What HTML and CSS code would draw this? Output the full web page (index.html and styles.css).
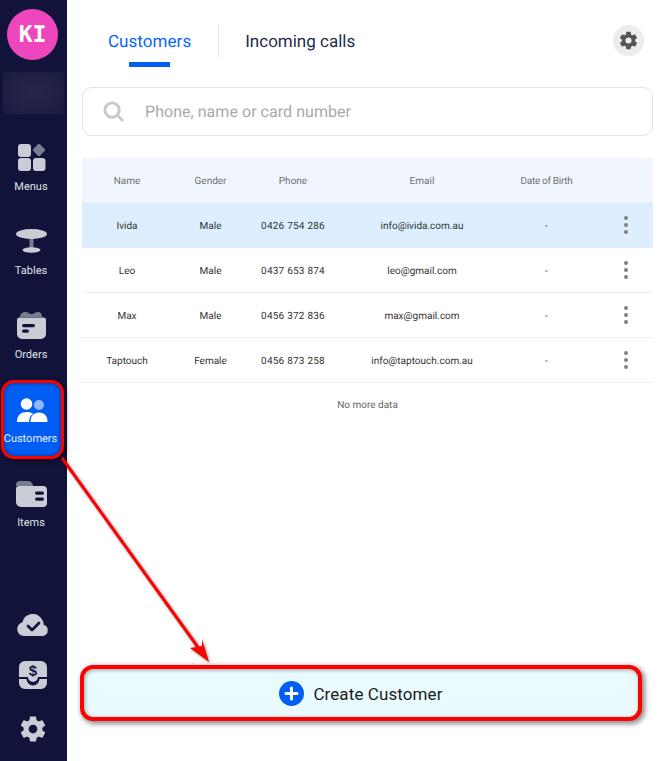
FILE: index.html
```html
<!DOCTYPE html>
<html lang="en">
<head>
<meta charset="utf-8">
<title>Customers</title>
<link rel="stylesheet" href="styles.css">
</head>
<body>
<div class="app">
  <aside class="sidebar">
    <div class="avatar">KI</div>
    <div class="blurred"></div>
    <nav class="nav">
      <a class="nav-item">
        <svg class="nav-icon" viewBox="0 0 32 32" width="32" height="32"><rect x="3" y="3" width="13" height="13" rx="3" fill="#c9ced6"/><rect x="3" y="17" width="13" height="13" rx="3" fill="#c9ced6"/><rect x="18" y="17" width="12.500" height="13" rx="3" fill="#c9ced6"/><rect x="19.250" y="4.250" width="9.500" height="9.500" rx="1.500" transform="rotate(45 24 9)" fill="#767e90"/></svg>
        <span>Menus</span>
      </a>
      <a class="nav-item">
        <svg class="nav-icon" viewBox="0 0 32 32" width="32" height="32"><rect x="14.500" y="12" width="4" height="13" fill="#767e90"/><ellipse cx="16.500" cy="25" rx="9" ry="2.800" fill="#c9ced6"/><ellipse cx="16.500" cy="9" rx="15.500" ry="5" fill="#c9ced6"/></svg>
        <span>Tables</span>
      </a>
      <a class="nav-item">
        <svg class="nav-icon" viewBox="0 0 32 32" width="32" height="32"><path d="M5 8C5 4.500 8 3 10.500 3S14 4 15 5H18C19 4 20.500 3 23 3S27 4.500 27 8z" fill="#767e90"/><path d="M2 11a2.500 2.500 0 0 1 2.500-2.500h24A2.500 2.500 0 0 1 31 11v14a5 5 0 0 1-5 5H7a5 5 0 0 1-5-5z" fill="#c9ced6"/><rect x="7" y="15" width="13" height="3.200" rx="1.600" fill="#12133a"/><rect x="7" y="20.500" width="7" height="3.200" rx="1.600" fill="#12133a"/></svg>
        <span>Orders</span>
      </a>
      <a class="nav-item nav-item-active">
        <svg class="nav-icon" viewBox="0 0 32 32" width="32" height="32"><circle cx="23" cy="12" r="5" fill="#8fb8ff"/><path d="M14.500 29c0-6 3-9.500 8.500-9.500s8.500 3.500 8.500 9.500z" fill="#fff"/><path d="M1 29c0-7 4-10 10-10 2.500 0 4.500.6 6 1.600-2.500 2-4 5-4 8.400z" fill="#fff"/><circle cx="10.500" cy="11" r="5.800" fill="#fff"/></svg>
        <span>Customers</span>
      </a>
      <a class="nav-item">
        <svg class="nav-icon" viewBox="0 0 32 32" width="32" height="32"><path d="M1 8a4 4 0 0 1 4-4h8a5 5 0 0 1 5 5H1z" fill="#767e90"/><path d="M1 11a3 3 0 0 1 3-2h24a4 4 0 0 1 4 4v13a4 4 0 0 1-4 4H6a5 5 0 0 1-5-5z" fill="#c9ced6"/><rect x="20" y="14.500" width="9" height="3.200" rx="1.600" fill="#12133a"/><rect x="20" y="20.500" width="9" height="3.200" rx="1.600" fill="#12133a"/></svg>
        <span>Items</span>
      </a>
    </nav>
    <div class="sidebar-bottom">
      <svg class="side-cloud" viewBox="0 0 34 26" width="34" height="26"><path d="M8 25a7 7 0 0 1-1.500-13.800A10.500 10.500 0 0 1 26 8.500a6 6 0 0 1 1.500 5.200 5.800 5.800 0 0 1-.5 11.300z" fill="#c9ced6"/><path d="M12 15l4 4 7-7" fill="none" stroke="#12133a" stroke-width="2.800" stroke-linecap="round" stroke-linejoin="round"/></svg>
      <svg class="side-till" viewBox="0 0 28 28" width="28" height="28"><path d="M0 6a6 6 0 0 1 6-6h16a6 6 0 0 1 6 6v10H19a5 5 0 0 1-10 0H0z" fill="#c9ced6"/><path d="M0 18h7.500a6.500 6.500 0 0 0 13 0H28v4a6 6 0 0 1-6 6H6a6 6 0 0 1-6-6z" fill="#c9ced6"/><text class="dollar" x="14" y="15" text-anchor="middle">$</text></svg>
      <svg viewBox="0 0 24 24" width="30" height="30"><path fill="#c9ced6" d="M19.430 12.980c.04-.32.07-.64.07-.98s-.03-.66-.07-.98l2.110-1.650c.19-.15.240-.42.120-.64l-2-3.460c-.12-.22-.39-.3-.61-.22l-2.490 1c-.52-.4-1.080-.73-1.690-.98l-.38-2.650A.49.490 0 0 0 14 2h-4c-.25 0-.46.18-.49.420l-.38 2.650c-.61.25-1.170.59-1.690.98l-2.490-1c-.23-.09-.49 0-.61.22l-2 3.460c-.13.220-.07.490.12.640l2.110 1.650c-.04.32-.07.65-.07.980s.03.660.07.980l-2.110 1.650c-.19.150-.24.420-.12.640l2 3.460c.12.220.39.300.61.220l2.490-1c.52.400 1.080.730 1.690.980l.38 2.650c.03.240.24.420.49.420h4c.25 0 .46-.18.49-.42l.38-2.650c.61-.25 1.170-.59 1.690-.98l2.490 1c.23.090.49 0 .61-.22l2-3.460c.12-.22.07-.49-.12-.64zM12 15.500a3.500 3.500 0 1 1 0-7 3.500 3.500 0 0 1 0 7z"/></svg>
    </div>
  </aside>

  <main class="main">
    <header class="topbar">
      <div class="tabs">
        <div class="tab tab-active">Customers</div>
        <div class="tab-sep"></div>
        <div class="tab">Incoming calls</div>
      </div>
      <button class="settings">
        <svg viewBox="0 0 24 24" width="21" height="21"><path fill="#555" d="M19.430 12.980c.04-.32.07-.64.07-.98s-.03-.66-.07-.98l2.110-1.650c.19-.15.240-.42.120-.64l-2-3.460c-.12-.22-.39-.3-.61-.22l-2.490 1c-.52-.4-1.080-.73-1.690-.98l-.38-2.650A.49.490 0 0 0 14 2h-4c-.25 0-.46.18-.49.420l-.38 2.650c-.61.25-1.170.59-1.690.98l-2.490-1c-.23-.09-.49 0-.61.22l-2 3.460c-.13.220-.07.490.12.640l2.110 1.650c-.04.32-.07.65-.07.980s.03.660.07.980l-2.110 1.650c-.19.150-.24.420-.12.640l2 3.460c.12.220.39.300.61.220l2.490-1c.52.400 1.080.730 1.690.980l.38 2.650c.03.240.24.420.49.420h4c.25 0 .46-.18.49-.42l.38-2.650c.61-.25 1.170-.59 1.690-.98l2.490 1c.23.090.49 0 .61-.22l2-3.460c.12-.22.07-.49-.12-.64zM12 15.500a3.500 3.500 0 1 1 0-7 3.500 3.500 0 0 1 0 7z"/></svg>
      </button>
    </header>

    <div class="search">
      <svg viewBox="0 0 22 22" width="21" height="21"><circle cx="9.500" cy="9.500" r="7.500" fill="none" stroke="#c8c8c8" stroke-width="3"/><path d="M15 15l5 5" stroke="#c8c8c8" stroke-width="3" stroke-linecap="round"/></svg>
      <span>Phone, name or card number</span>
    </div>

    <div class="table">
      <div class="row row-head">
        <div>Name</div><div>Gender</div><div>Phone</div><div>Email</div><div class="cell-dob">Date of Birth</div><div></div>
      </div>
      <div class="row row-selected">
        <div>Ivida</div><div>Male</div><div class="cell-phone">0426 754 286</div><div>info@ivida.com.au</div><div>-</div><div class="more"><i></i><i></i><i></i></div>
      </div>
      <div class="row">
        <div>Leo</div><div>Male</div><div class="cell-phone">0437 653 874</div><div>leo@gmail.com</div><div>-</div><div class="more"><i></i><i></i><i></i></div>
      </div>
      <div class="row">
        <div>Max</div><div>Male</div><div class="cell-phone">0456 372 836</div><div>max@gmail.com</div><div>-</div><div class="more"><i></i><i></i><i></i></div>
      </div>
      <div class="row">
        <div>Taptouch</div><div>Female</div><div class="cell-phone">0456 873 258</div><div>info@taptouch.com.au</div><div>-</div><div class="more"><i></i><i></i><i></i></div>
      </div>
      <div class="no-more">No more data</div>
    </div>

    <button class="create">
      <svg viewBox="0 0 25 25" width="25" height="25"><circle cx="12.500" cy="12.500" r="12.500" fill="#005ef5"/><path d="M12.500 7v11M7 12.500h11" stroke="#fff" stroke-width="3" stroke-linecap="round"/></svg>
      <span class="create-label">Create Customer</span>
    </button>
  </main>
</div>

<svg class="annotation-arrow" viewBox="0 0 666 761" width="666" height="761">
  <path d="M62 458L205 657" stroke="#ff0000" stroke-width="3" fill="none"/>
  <path d="M209 662L190 648L202 646L202 639z" fill="#ff0000"/>
</svg>
</body>
</html>
```
FILE: styles.css
```css
* { box-sizing: border-box; }
html, body { margin: 0; padding: 0; }
body {
  width: 666px;
  height: 761px;
  overflow: hidden;
  background: #fff;
  font-family: Roboto, "Liberation Sans", sans-serif;
  text-rendering: geometricPrecision;
  position: relative;
}
.app { display: flex; height: 761px; }

.sidebar {
  width: 67px;
  flex: none;
  background: #12133a;
  display: flex;
  flex-direction: column;
  align-items: center;
  padding-top: 9px;
}
.avatar {
  width: 51px;
  height: 51px;
  margin-left: -2px;
  border-radius: 50%;
  background: #ee46bc;
  color: #fff;
  display: flex;
  align-items: center;
  justify-content: center;
  font-family: "DejaVu Sans Mono", "Liberation Mono", monospace;
  font-weight: 700;
  font-size: 23px;
}
.blurred {
  width: 61px;
  height: 42px;
  margin-top: 12px;
  background: radial-gradient(ellipse at center, #25274a 0%, #1a1b40 100%);
}
.nav {
  display: flex;
  flex-direction: column;
  align-items: center;
  margin-top: 27px;
  margin-left: -5px;
}
.nav-item {
  width: 58px;
  height: 84px;
  display: flex;
  flex-direction: column;
  align-items: center;
  color: #dfe2e8;
  font-size: 11px;
  line-height: 13px;
}
.nav-icon { height: 32px; margin-bottom: 7px; flex: none; }
.nav-item span { display: block; }
.nav-item-active {
  align-self: flex-start;
  width: 57px;
  height: 73px;
  margin: -10px 0 21px 2px;
  padding: 10px 3px 0 0;
  background: #005ef5;
  border-radius: 10px;
  color: #e8f0ff;
  box-shadow: inset 0 0 4px rgba(0, 0, 60, .5), 0 0 0 3px #ff0000, 2px 2px 5px 3px rgba(0, 0, 0, .4);
}
.nav-item-active .nav-icon { margin-left: 2px; }
.sidebar-bottom {
  margin-top: auto;
  margin-left: -1px;
  padding-bottom: 17px;
  display: flex;
  flex-direction: column;
  align-items: center;
  gap: 25px;
}
.side-till { margin-top: -1px; }
.dollar { font: 700 15px "Liberation Sans", sans-serif; fill: #12133a; }

.main {
  flex: 1;
  min-width: 0;
  display: flex;
  flex-direction: column;
  padding: 0 13px 0 15px;
}
.topbar {
  height: 87px;
  display: flex;
  justify-content: space-between;
  align-items: flex-start;
}
.tabs { display: flex; align-items: flex-start; padding-top: 24px; }
.tab {
  position: relative;
  font-size: 17px;
  line-height: 37px;
  color: #232c4b;
  padding: 0 26px;
  white-space: nowrap;
}
.tab-active { color: #0a66f5; padding-right: 27px; letter-spacing: .05px; }
.tab-active::after {
  content: "";
  position: absolute;
  left: 47px;
  bottom: -6px;
  width: 41px;
  height: 5px;
  background: #005ef5;
}
.tab-sep { width: 1px; height: 33px; background: #e3e3e3; }
.settings {
  width: 31px;
  height: 31px;
  margin-top: 25px;
  margin-right: 9px;
  border: 0;
  padding: 0;
  border-radius: 50%;
  background: #ececec;
  display: flex;
  align-items: center;
  justify-content: center;
}
.search {
  height: 49px;
  border: 1px solid #e2e2e2;
  border-radius: 10px;
  display: flex;
  align-items: center;
  padding-left: 20px;
  gap: 21px;
  color: #a9a9a9;
  font-size: 16px;
  letter-spacing: .04px;
  flex: none;
}
.table { margin-top: 22px; }
.row {
  display: grid;
  grid-template-columns: 90px 77px 88px 170px 79px 67px;
  height: 45px;
  padding-top: 2px;
  align-items: center;
  text-align: center;
  font-size: 10px;
  color: #333;
  border-bottom: 1px solid #eeeeee;
}
.row-head { background: #f1f6fe; color: #707070; }
.row-selected { background: #ddeffe; border-bottom-color: #ddeffe; }
.cell-phone { letter-spacing: .22px; }
.cell-dob { letter-spacing: -.3px; }
.more {
  display: flex;
  flex-direction: column;
  align-items: flex-end;
  margin-top: -2px;
  padding-right: 25px;
  gap: 3px;
}
.more i { width: 4px; height: 4px; border-radius: 50%; background: #808080; display: block; }
.no-more {
  text-align: center;
  font-size: 10px;
  color: #666;
  padding-top: 17px;
}
.create {
  position: absolute;
  left: 80px;
  top: 665px;
  width: 562px;
  height: 56px;
  border: 4px solid #ff0000;
  border-radius: 13px;
  background: #e9fbfe;
  box-shadow: 2px 2px 5px 1px rgba(0, 0, 0, .45), inset 1px 1px 4px rgba(0, 0, 0, .35);
  display: flex;
  align-items: center;
  justify-content: center;
  gap: 9px;
  font: 400 17px Roboto, sans-serif;
  letter-spacing: .1px;
  color: #1c1c1c;
  padding: 0;
}
.create-label { margin-top: 2px; }
.annotation-arrow {
  position: absolute;
  left: 0;
  top: 0;
  pointer-events: none;
  filter: drop-shadow(1px 1px 1.500px rgba(0, 0, 0, .45));
}
```
